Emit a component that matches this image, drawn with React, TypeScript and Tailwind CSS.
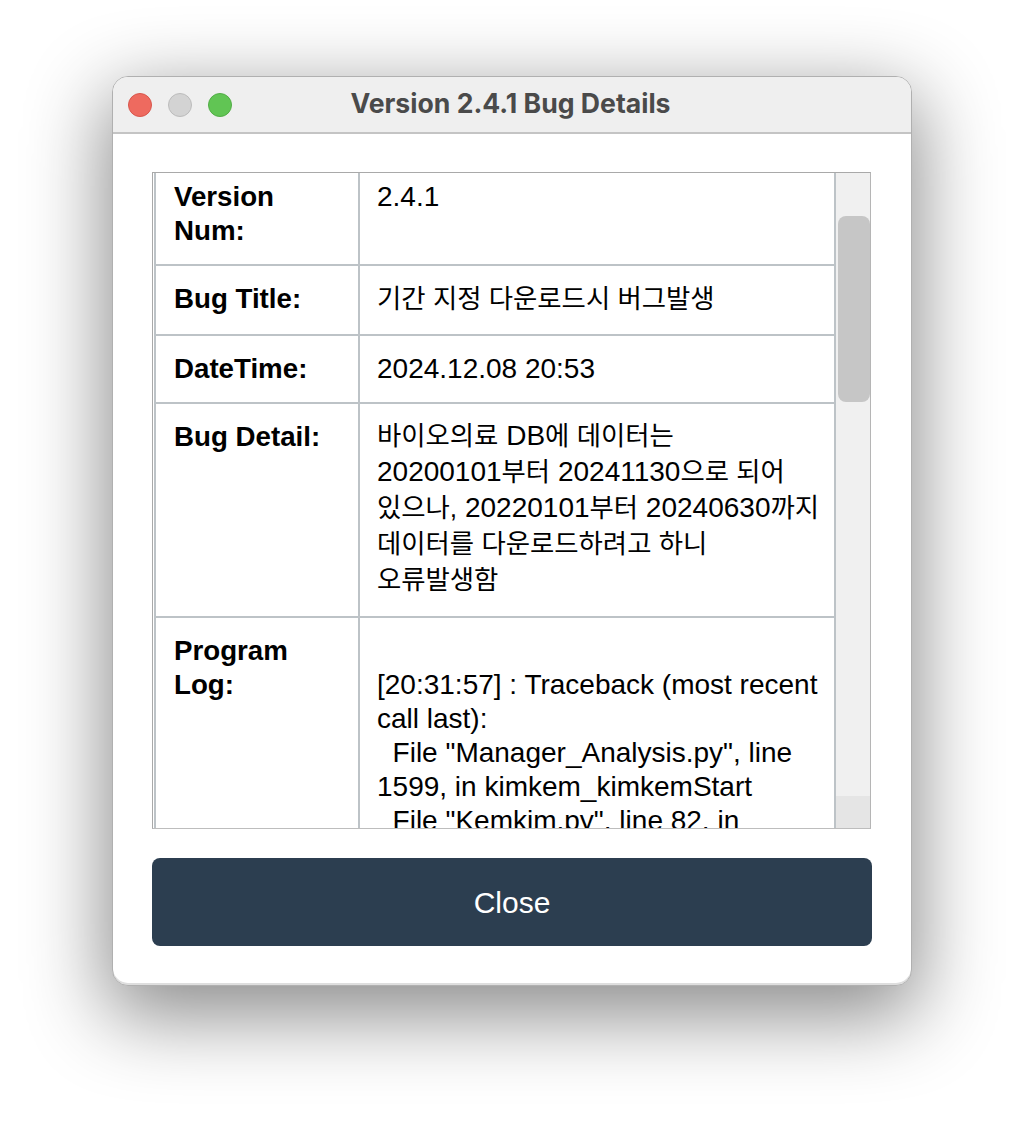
import React from 'react';

const KR = "font-['Liberation_Sans','Noto_Sans_CJK_KR',sans-serif]";

// hangul runs sit a bit smaller than the latin text around them
const Ko: React.FC<{ children: React.ReactNode }> = ({ children }) => <span className="text-[26.4px]">{children}</span>;

const Row: React.FC<{ label: React.ReactNode; h: string; children: React.ReactNode; last?: boolean }> = ({ label, h, children, last }) => (
  <div className={`flex ${h} shrink-0 ${last ? '' : 'border-b-2 border-[#bdc3c7]'}`}>
    <div className="w-[204px] shrink-0 pl-[18px] pt-[6px] font-bold text-[27.7px] leading-[34px] border-r-2 border-[#bdc3c7]">{label}</div>
    <div className="flex-1 pl-[17px] pr-[10px] pt-[6px] whitespace-nowrap">{children}</div>
  </div>
);

const App: React.FC = () => {
  return (
    <div className={`w-[1024px] h-[1134px] bg-white pt-[76px] pl-[112px] ${KR}`}>
      <div className="w-[800px] h-[910px] rounded-[16px] bg-white border border-[#b0b0b0] shadow-[0_24px_80px_6px_rgba(0,0,0,0.46),inset_0_-2px_0_#dedede] overflow-hidden flex flex-col">
        {/* title bar */}
        <div className="h-[57px] shrink-0 bg-[#efefef] border-b-2 border-[#c4c4c4] flex items-center relative">
          <div className="flex gap-[16px] pl-[15px]">
            <span className="w-[24px] h-[24px] rounded-full bg-[#ee6a5f] border border-[#d8564c]"></span>
            <span className="w-[24px] h-[24px] rounded-full bg-[#d3d3d3] border border-[#bcbcbc]"></span>
            <span className="w-[24px] h-[24px] rounded-full bg-[#61c554] border border-[#52ad46]"></span>
          </div>
          <div className="absolute inset-0 pr-[3px] pb-[2px] flex items-center justify-center text-[26.6px] font-bold text-[#4a4a4a] font-['Inter',sans-serif]">Version 2.4.1 Bug Details</div>
        </div>

        <div className="flex-1 px-[39px] pt-[38px] flex flex-col">
          {/* table with scrollbar */}
          <div className="w-[719px] h-[657px] shrink-0 border border-[#a9a9a9] border-b-[#bdbdbd] border-r-[#b5b5b5] flex overflow-hidden">
            <div className="w-[682px] ml-[1px] shrink-0 border-l-2 border-r-2 border-[#bdc3c7] flex flex-col text-[28px] leading-[34px] text-black overflow-hidden">
              <Row label={<div className="pt-[1px]">Version<br />Num:</div>} h="h-[93px]"><div className="pt-[1px]">2.4.1</div></Row>
              <Row label={<div className="pt-[10px]">Bug Title:</div>} h="h-[70px]"><div className="pt-[10px]"><Ko>기간 지정 다운로드시 버그발생</Ko></div></Row>
              <Row label={<div className="pt-[10px]">DateTime:</div>} h="h-[68px]"><div className="pt-[10px]">2024.12.08 20:53</div></Row>
              <Row label={<div className="pt-[10px]">Bug Detail:</div>} h="h-[214px]">
                <div className="pt-[8px] leading-[36px]">
                  <Ko>바이오의료</Ko> DB<Ko>에 데이터는</Ko><br />
                  20200101<Ko>부터</Ko> 20241130<Ko>으로 되어</Ko><br />
                  <Ko>있으나,</Ko> 20220101<Ko>부터</Ko> 20240630<Ko>까지</Ko><br />
                  <Ko>데이터를 다운로드하려고 하니</Ko><br />
                  <Ko>오류발생함</Ko>
                </div>
              </Row>
              <Row label={<div className="pt-[10px]">Program<br />Log:</div>} h="h-[300px]" last>
                <div className="pt-[44px] whitespace-pre">{`[20:31:57] : Traceback (most recent\ncall last):\n  File "Manager_Analysis.py", line\n1599, in kimkem_kimkemStart\n  File "Kemkim.py", line 82, in`}</div>
              </Row>
            </div>
            {/* scrollbar */}
            <div className="flex-1 bg-[#f0f0f0] flex flex-col pl-[2px]">
              <div className="h-[43px] shrink-0"></div>
              <div className="h-[186px] shrink-0 bg-[#c6c6c6] rounded-[8px]"></div>
              <div className="flex-1"></div>
              <div className="h-[32px] shrink-0 bg-[#e5e5e5] -ml-[2px]"></div>
            </div>
          </div>

          <button className="mt-[29px] w-[720px] h-[88px] shrink-0 rounded-[8px] bg-[#2c3e50] text-white text-[30px]">Close</button>
        </div>
      </div>
    </div>
  );
};

export default App;
